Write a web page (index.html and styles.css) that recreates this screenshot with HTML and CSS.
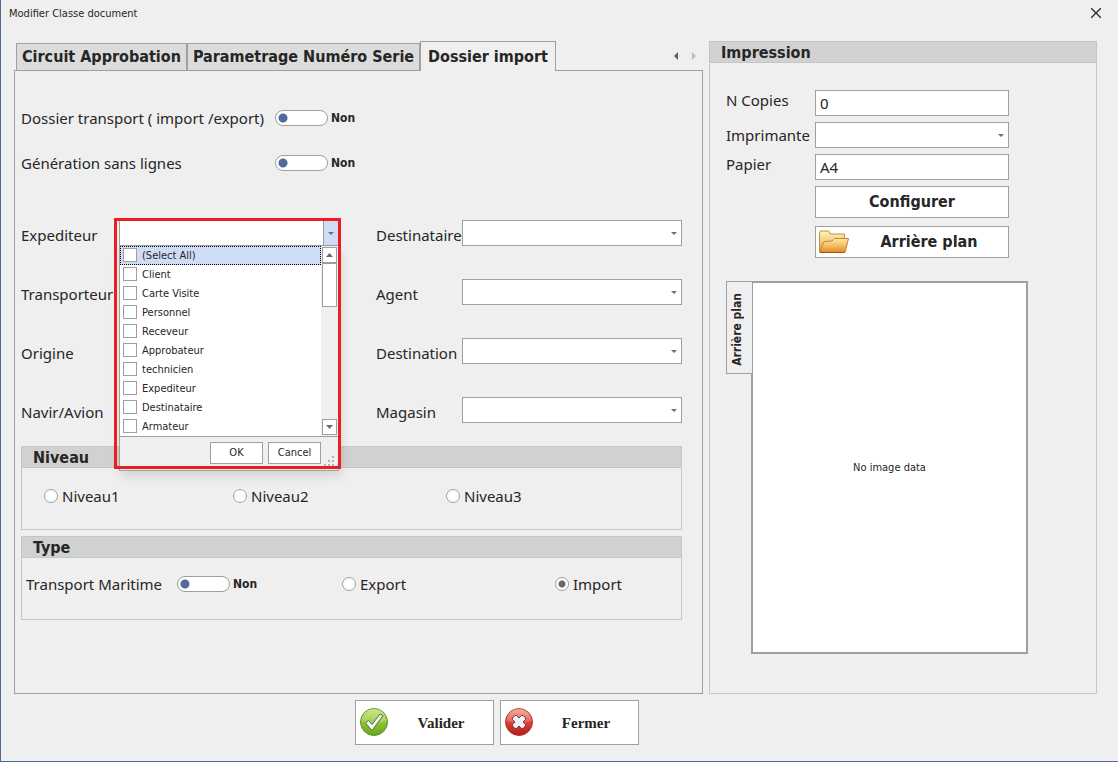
FILE: index.html
```html
<!DOCTYPE html>
<html lang="fr">
<head>
<meta charset="utf-8">
<meta name="viewport" content="width=device-width, initial-scale=1">
<title>Modifier Classe document</title>
<link rel="stylesheet" href="styles.css">
</head>
<body>
<div class="window">
  <header class="titlebar">
    <h1 class="titlebar-text">Modifier Classe document</h1>
    <button class="close" type="button" aria-label="Close">
      <svg width="10" height="10" viewBox="0 0 10 10"><path d="M0 0 10 10M10 0 0 10" fill="none" stroke="#2b2b2b" stroke-width="1.3"/></svg>
    </button>
  </header>

  <main class="main">
    <section class="tabs">
      <div class="tab-strip">
        <div class="tab-list" role="tablist">
          <button class="tab" type="button" role="tab">Circuit Approbation</button>
          <button class="tab" type="button" role="tab">Parametrage Numéro Serie</button>
          <button class="tab tab-active" type="button" role="tab" aria-selected="true">Dossier import</button>
        </div>
        <div class="tab-nav">
          <button class="nav-button" type="button" aria-label="Previous tab"><svg width="4" height="8" viewBox="0 0 4 8"><path d="M4 0v8L0 4z" fill="#5f5f5f"/></svg></button>
          <button class="nav-button" type="button" aria-label="Next tab" disabled><svg width="4" height="8" viewBox="0 0 4 8"><path d="M0 0v8l4-4z" fill="#bdbdbd"/></svg></button>
        </div>
      </div>

      <div class="tab-page" role="tabpanel">
        <div class="switch-row">
          <label class="label" for="dossier">Dossier transport ( import /export)</label>
          <input class="switch" type="checkbox" role="switch" id="dossier">
          <span class="switch-state">Non</span>
        </div>
        <div class="switch-row">
          <label class="label" for="generation">Génération sans lignes</label>
          <input class="switch" type="checkbox" role="switch" id="generation">
          <span class="switch-state">Non</span>
        </div>

        <div class="fields">
          <label class="label" for="expediteur">Expediteur</label>
          <div class="combo combo-open">
            <select class="box" id="expediteur"><option></option></select>
            <div class="popup">
              <div class="popup-list">
                <div class="options">
                  <label class="option option-current"><input class="check" type="checkbox">(Select All)</label>
                  <label class="option"><input class="check" type="checkbox">Client</label>
                  <label class="option"><input class="check" type="checkbox">Carte Visite</label>
                  <label class="option"><input class="check" type="checkbox">Personnel</label>
                  <label class="option"><input class="check" type="checkbox">Receveur</label>
                  <label class="option"><input class="check" type="checkbox">Approbateur</label>
                  <label class="option"><input class="check" type="checkbox">technicien</label>
                  <label class="option"><input class="check" type="checkbox">Expediteur</label>
                  <label class="option"><input class="check" type="checkbox">Destinataire</label>
                  <label class="option"><input class="check" type="checkbox">Armateur</label>
                </div>
                <div class="scroll">
                  <button class="scroll-button" type="button" aria-label="Scroll up"><svg width="7" height="4" viewBox="0 0 7 4"><path d="M0 4h7L3.500 0z" fill="#6b6b6b"/></svg></button>
                  <div class="scroll-thumb"></div>
                  <button class="scroll-button scroll-down" type="button" aria-label="Scroll down"><svg width="7" height="4" viewBox="0 0 7 4"><path d="M0 0h7L3.500 4z" fill="#6b6b6b"/></svg></button>
                </div>
              </div>
              <div class="popup-footer">
                <button class="small-button" type="button">OK</button>
                <button class="small-button" type="button">Cancel</button>
                <svg class="grip" width="11" height="11" viewBox="0 0 11 11" fill="#b4b4b4"><path d="M8 0h2v2h-2zM4 4h2v2h-2zM8 4h2v2h-2zM0 8h2v2h-2zM4 8h2v2h-2zM8 8h2v2h-2z"/></svg>
              </div>
            </div>
            <div class="highlight"></div>
          </div>
          <label class="label label-second" for="destinataire">Destinataire</label>
          <div class="combo"><select class="box" id="destinataire"><option></option></select></div>

          <label class="label" for="transporteur">Transporteur</label>
          <div class="combo"><select class="box" id="transporteur"><option></option></select></div>
          <label class="label label-second" for="agent">Agent</label>
          <div class="combo"><select class="box" id="agent"><option></option></select></div>

          <label class="label" for="origine">Origine</label>
          <div class="combo"><select class="box" id="origine"><option></option></select></div>
          <label class="label label-second" for="destination">Destination</label>
          <div class="combo"><select class="box" id="destination"><option></option></select></div>

          <label class="label" for="navir">Navir/Avion</label>
          <div class="combo"><select class="box" id="navir"><option></option></select></div>
          <label class="label label-second" for="magasin">Magasin</label>
          <div class="combo"><select class="box" id="magasin"><option></option></select></div>
        </div>

        <section class="group">
          <h2 class="group-title">Niveau</h2>
          <div class="group-row niveau-row">
            <label class="choice"><input class="radio" type="radio" name="niveau">Niveau1</label>
            <label class="choice"><input class="radio" type="radio" name="niveau">Niveau2</label>
            <label class="choice"><input class="radio" type="radio" name="niveau">Niveau3</label>
          </div>
        </section>

        <section class="group">
          <h2 class="group-title">Type</h2>
          <div class="group-row type-row">
            <label class="label" for="maritime">Transport Maritime</label>
            <div class="switch-cell">
              <input class="switch" type="checkbox" role="switch" id="maritime">
              <span class="switch-state">Non</span>
            </div>
            <label class="choice"><input class="radio" type="radio" name="type">Export</label>
            <label class="choice"><input class="radio" type="radio" name="type" checked>Import</label>
          </div>
        </section>
      </div>
    </section>

    <section class="group print">
      <h2 class="group-title">Impression</h2>
      <div class="print-fields">
        <label class="label label-top" for="copies">N Copies</label>
        <input class="box" type="text" id="copies" value="0">
        <label class="label" for="imprimante">Imprimante</label>
        <div class="combo"><select class="box" id="imprimante"><option></option></select></div>
        <label class="label label-top" for="papier">Papier</label>
        <input class="box" type="text" id="papier" value="A4">
        <div class="print-actions">
          <button class="button" type="button">Configurer</button>
          <button class="button button-icon" type="button">
            <svg width="32" height="26" viewBox="0 0 32 26">
              <defs>
                <linearGradient id="fb" x1="0" y1="0" x2="0" y2="1"><stop offset="0" stop-color="#fff3b8"/><stop offset="1" stop-color="#e3a94a"/></linearGradient>
                <linearGradient id="ff" x1="0" y1="0" x2="0" y2="1"><stop offset="0" stop-color="#ffe9ae"/><stop offset=".5" stop-color="#f6bf62"/><stop offset="1" stop-color="#dd8a2c"/></linearGradient>
              </defs>
              <path d="M1.500 23V3.500l1-1.500h8l2 3h14v17z" fill="url(#fb)" stroke="#c98c35"/>
              <path d="M2 23.500 5 14l1.500-1.500 7.500-.5 2.500-2.500h14l-3.500 14z" fill="url(#ff)" stroke="#c9812f"/>
              <path d="M2 23.500h24.500" stroke="#a8521e"/>
            </svg>
            <span class="button-text">Arrière plan</span>
          </button>
        </div>
      </div>
      <div class="preview">
        <button class="side-tab" type="button"><span class="side-text">Arrière plan</span></button>
        <div class="picture">No image data</div>
      </div>
    </section>
  </main>

  <footer class="footer">
    <button class="action" type="button">
      <svg width="30" height="30" viewBox="0 0 30 30">
        <defs><linearGradient id="ok" x1="0" y1="0" x2="0" y2="1"><stop offset="0" stop-color="#c5e46b"/><stop offset=".5" stop-color="#8fc436"/><stop offset="1" stop-color="#69a31f"/></linearGradient></defs>
        <circle cx="15" cy="14" r="13.500" fill="url(#ok)" stroke="#5d9424"/>
        <path d="M2.500 13a12.500 12.500 0 0 1 25 0q-12.500 4-25 0z" fill="#fff" opacity=".18"/>
        <path d="m6.500 15 3-2.500 3.500 4 8-10.500 3 1.500-11 15z" fill="#f3f6fa" stroke="#55762f"/>
      </svg>
      <span class="button-text">Valider</span>
    </button>
    <button class="action" type="button">
      <svg width="30" height="30" viewBox="0 0 30 30">
        <defs><linearGradient id="no" x1="0" y1="0" x2="0" y2="1"><stop offset="0" stop-color="#f0a090"/><stop offset=".5" stop-color="#d9433a"/><stop offset="1" stop-color="#b01e17"/></linearGradient></defs>
        <circle cx="15" cy="14" r="13.500" fill="url(#no)" stroke="#b5382d"/>
        <path d="M2.500 13a12.500 12.500 0 0 1 25 0q-12.500 4-25 0z" fill="#fff" opacity=".18"/>
        <path d="m8.500 10 2.500-2.500h1.500l2.500 2.500 2.500-2.500h1.500l2.500 2.500v1.500l-2.500 2.500 2.500 2.500v1.500l-2.500 2.500h-1.500l-2.500-2.500-2.500 2.500h-1.500l-2.500-2.500v-1.500l2.500-2.500-2.500-2.500z" fill="#eef3fb" stroke="#8e2a27" stroke-linejoin="round"/>
      </svg>
      <span class="button-text">Fermer</span>
    </button>
  </footer>
</div>
</body>
</html>
```
FILE: styles.css
```css
:root {
  --face: #efefef;
  --line: #9f9f9f;
  --soft-line: #c6c6c6;
  --title: #d1d1d1;
  --accent: #4f6b9c;
  --pick: #cfdcf5;
  --ink: #262626;
  --ui: "DejaVu Sans Condensed", "Noto Sans", sans-serif;
  --form: "Noto Sans", "Open Sans", sans-serif;
}

* { box-sizing: border-box; }

body {
  margin: 0;
  background: var(--face);
  color: var(--ink);
  font-family: var(--ui);
  font-size: 15px;
  line-height: 20px;
}

button, input, select {
  margin: 0;
  padding: 0;
  border: 0;
  border-radius: 0;
  background: none;
  color: inherit;
  font: inherit;
}

svg { display: block; flex: none; }

.window {
  display: flex;
  flex-direction: column;
  min-height: 100vh;
  border-left: 1px solid var(--accent);
  border-bottom: 1px solid var(--accent);
}

/* Title bar */
.titlebar {
  display: flex;
  justify-content: space-between;
  align-items: center;
  height: 26px;
  padding: 0 17px 0 8px;
}

.titlebar-text {
  margin: 0;
  padding-top: 2px;
  font-size: 11px;
  font-weight: 400;
}

.close { padding: 0; }

.main {
  flex: 1;
  display: grid;
  grid-template-columns: minmax(0, 1fr) 388px;
  gap: 6px;
  padding: 15px 21px 6px 13px;
}

/* Tabs */
.tabs {
  display: flex;
  flex-direction: column;
}

.tab-strip {
  display: flex;
  justify-content: space-between;
  align-items: center;
  height: 29px;
  padding: 0 7px 0 2px;
}

.tab-list {
  display: flex;
  align-items: flex-end;
  height: 29px;
}

.tab {
  height: 27px;
  padding: 0 5px;
  border: 1px solid var(--line);
  border-bottom: 0;
  background: #dcdcdc;
  font-weight: 700;
  font-size: 16px;
  white-space: nowrap;
}

.tab-active {
  z-index: 1;
  height: 30px;
  margin-bottom: -1px;
  padding: 0 7px;
  background: var(--face);
}

.tab-nav {
  display: flex;
  gap: 14px;
}

.tab-page {
  flex: 1;
  padding: 24px 20px 0 6px;
  border: 1px solid var(--line);
}

.label {
  font-family: var(--form);
  white-space: nowrap;
}

.switch-row {
  display: grid;
  grid-template-columns: 254px 53px auto;
  align-items: center;
  height: 45px;
}

.switch {
  appearance: none;
  width: 53px;
  height: 16px;
  border: 1px solid var(--line);
  border-radius: 8px;
  background: radial-gradient(circle at 7px 7px, var(--accent) 4px, #fff 5px);
}

.switch-state {
  padding-left: 3px;
  font-size: 12px;
  font-weight: 700;
}

/* Field grid */
.fields {
  display: grid;
  grid-template-columns: 98px minmax(0, 1fr) 123px minmax(0, 1fr);
  row-gap: 33px;
  padding: 35px 0 23px;
}

.fields .label { padding-top: 5px; }
.fields .label-second { padding-left: 37px; }

.box {
  display: block;
  width: 100%;
  height: 26px;
  padding: 0 4px;
  border: 1px solid var(--line);
  background: #fff;
  font-family: var(--form);
  appearance: none;
}

.combo { position: relative; height: 26px; }

.combo::after {
  content: "";
  position: absolute;
  top: 12px;
  right: 5px;
  width: 6px;
  height: 3px;
  background: #707070;
  clip-path: polygon(0 0, 100% 0, 50% 100%);
  pointer-events: none;
}

.combo-open { z-index: 2; }

.combo-open .box {
  background: linear-gradient(to left, var(--pick) 14px, var(--line) 14px, var(--line) 15px, #fff 15px);
}

.popup {
  position: absolute;
  top: 26px;
  left: 0;
  right: 0;
  border: 1px solid var(--line);
  border-top: 0;
  background: #fff;
  box-shadow: 2px 5px 10px rgba(0, 0, 0, 0.12);
  font-size: 11px;
}

.popup-list { display: flex; }
.options { flex: 1; }

.option {
  display: flex;
  align-items: flex-start;
  gap: 5px;
  height: 19px;
  padding: 2px 0 0 3px;
  line-height: 16px;
}

.option-current {
  background: var(--pick);
  outline: 1px dotted #000;
  outline-offset: -1px;
}

.check {
  appearance: none;
  width: 14px;
  height: 14px;
  border: 1px solid var(--line);
  background: #fff;
}

.scroll {
  display: flex;
  flex-direction: column;
  width: 17px;
  padding: 1px;
  background: var(--face);
}

.scroll-button {
  display: flex;
  justify-content: center;
  align-items: center;
  height: 16px;
  border: 1px solid var(--line);
  background: #fff;
}

.scroll-thumb {
  height: 44px;
  border: 1px solid var(--line);
  background: #fff;
}

.scroll-down { margin-top: auto; }

.popup-footer {
  display: flex;
  gap: 5px;
  justify-content: flex-end;
  padding: 5px 17px 6px;
  border-top: 1px solid var(--line);
  background: var(--face);
}

.small-button {
  width: 53px;
  height: 22px;
  border: 1px solid var(--line);
  background: #fff;
}

.grip {
  position: absolute;
  right: 3px;
  bottom: 3px;
}

.highlight {
  position: absolute;
  top: -2px;
  left: -5px;
  right: -2px;
  height: 251px;
  border: 3px solid #ee1c25;
  pointer-events: none;
}

/* Groups */
.group { border: 1px solid var(--soft-line); }
.group + .group { margin-top: 6px; }

.group-title {
  margin: 0;
  padding: 2px 0 0 11px;
  border-bottom: 1px solid var(--soft-line);
  background: var(--title);
  font-size: 16px;
  font-weight: 700;
  line-height: 18px;
}

.group-row {
  display: grid;
  align-items: center;
  height: 61px;
  padding-bottom: 6px;
}

.niveau-row {
  grid-template-columns: 189px 213px auto;
  padding-left: 22px;
}

.type-row {
  grid-template-columns: 151px 165px 213px auto;
  padding: 0 0 10px 4px;
}

.switch-cell {
  display: flex;
  align-items: center;
}

.choice {
  display: flex;
  align-items: center;
  gap: 4px;
  font-family: var(--form);
}

.radio {
  appearance: none;
  width: 14px;
  height: 14px;
  border: 1px solid var(--line);
  border-radius: 50%;
  background: #fff;
}

.radio:checked { background: radial-gradient(circle, #6b6b6b 3px, #fff 4px); }

/* Print panel */
.print {
  display: flex;
  flex-direction: column;
  padding-bottom: 39px;
}

.print-fields {
  display: grid;
  grid-template-columns: 89px minmax(0, 1fr);
  align-items: center;
  row-gap: 6px;
  padding: 27px 87px 0 16px;
}

.label-top { align-self: start; }

.print-actions {
  grid-column: 2;
  display: grid;
  gap: 8px;
}

.button {
  height: 32px;
  border: 1px solid var(--line);
  background: #fff;
  font-size: 16px;
  font-weight: 700;
}

.button-icon {
  display: flex;
  align-items: center;
  padding-left: 2px;
}

.button-text {
  flex: 1;
  text-align: center;
}

.preview {
  flex: 1;
  display: flex;
  align-items: flex-start;
  padding: 23px 68px 0 16px;
}

.side-tab {
  z-index: 1;
  display: flex;
  justify-content: center;
  align-items: center;
  width: 27px;
  height: 93px;
  margin-right: -2px;
  padding: 4px 6px 0 0;
  border: 1px solid var(--line);
  background: var(--face);
  font-size: 12px;
  font-weight: 700;
}

.side-text {
  writing-mode: vertical-rl;
  transform: rotate(180deg);
  white-space: nowrap;
}

.picture {
  flex: 1;
  align-self: stretch;
  display: flex;
  justify-content: center;
  align-items: center;
  border: 2px solid var(--line);
  background: #fff;
  font-size: 11px;
}

/* Footer */
.footer {
  display: flex;
  gap: 6px;
  padding: 0 0 16px 354px;
}

.action {
  display: flex;
  align-items: center;
  width: 139px;
  height: 45px;
  padding: 0 0 0 3px;
  border: 1px solid var(--line);
  background: #fff;
  font-family: "Liberation Serif", serif;
  font-size: 15px;
  font-weight: 700;
}
```
